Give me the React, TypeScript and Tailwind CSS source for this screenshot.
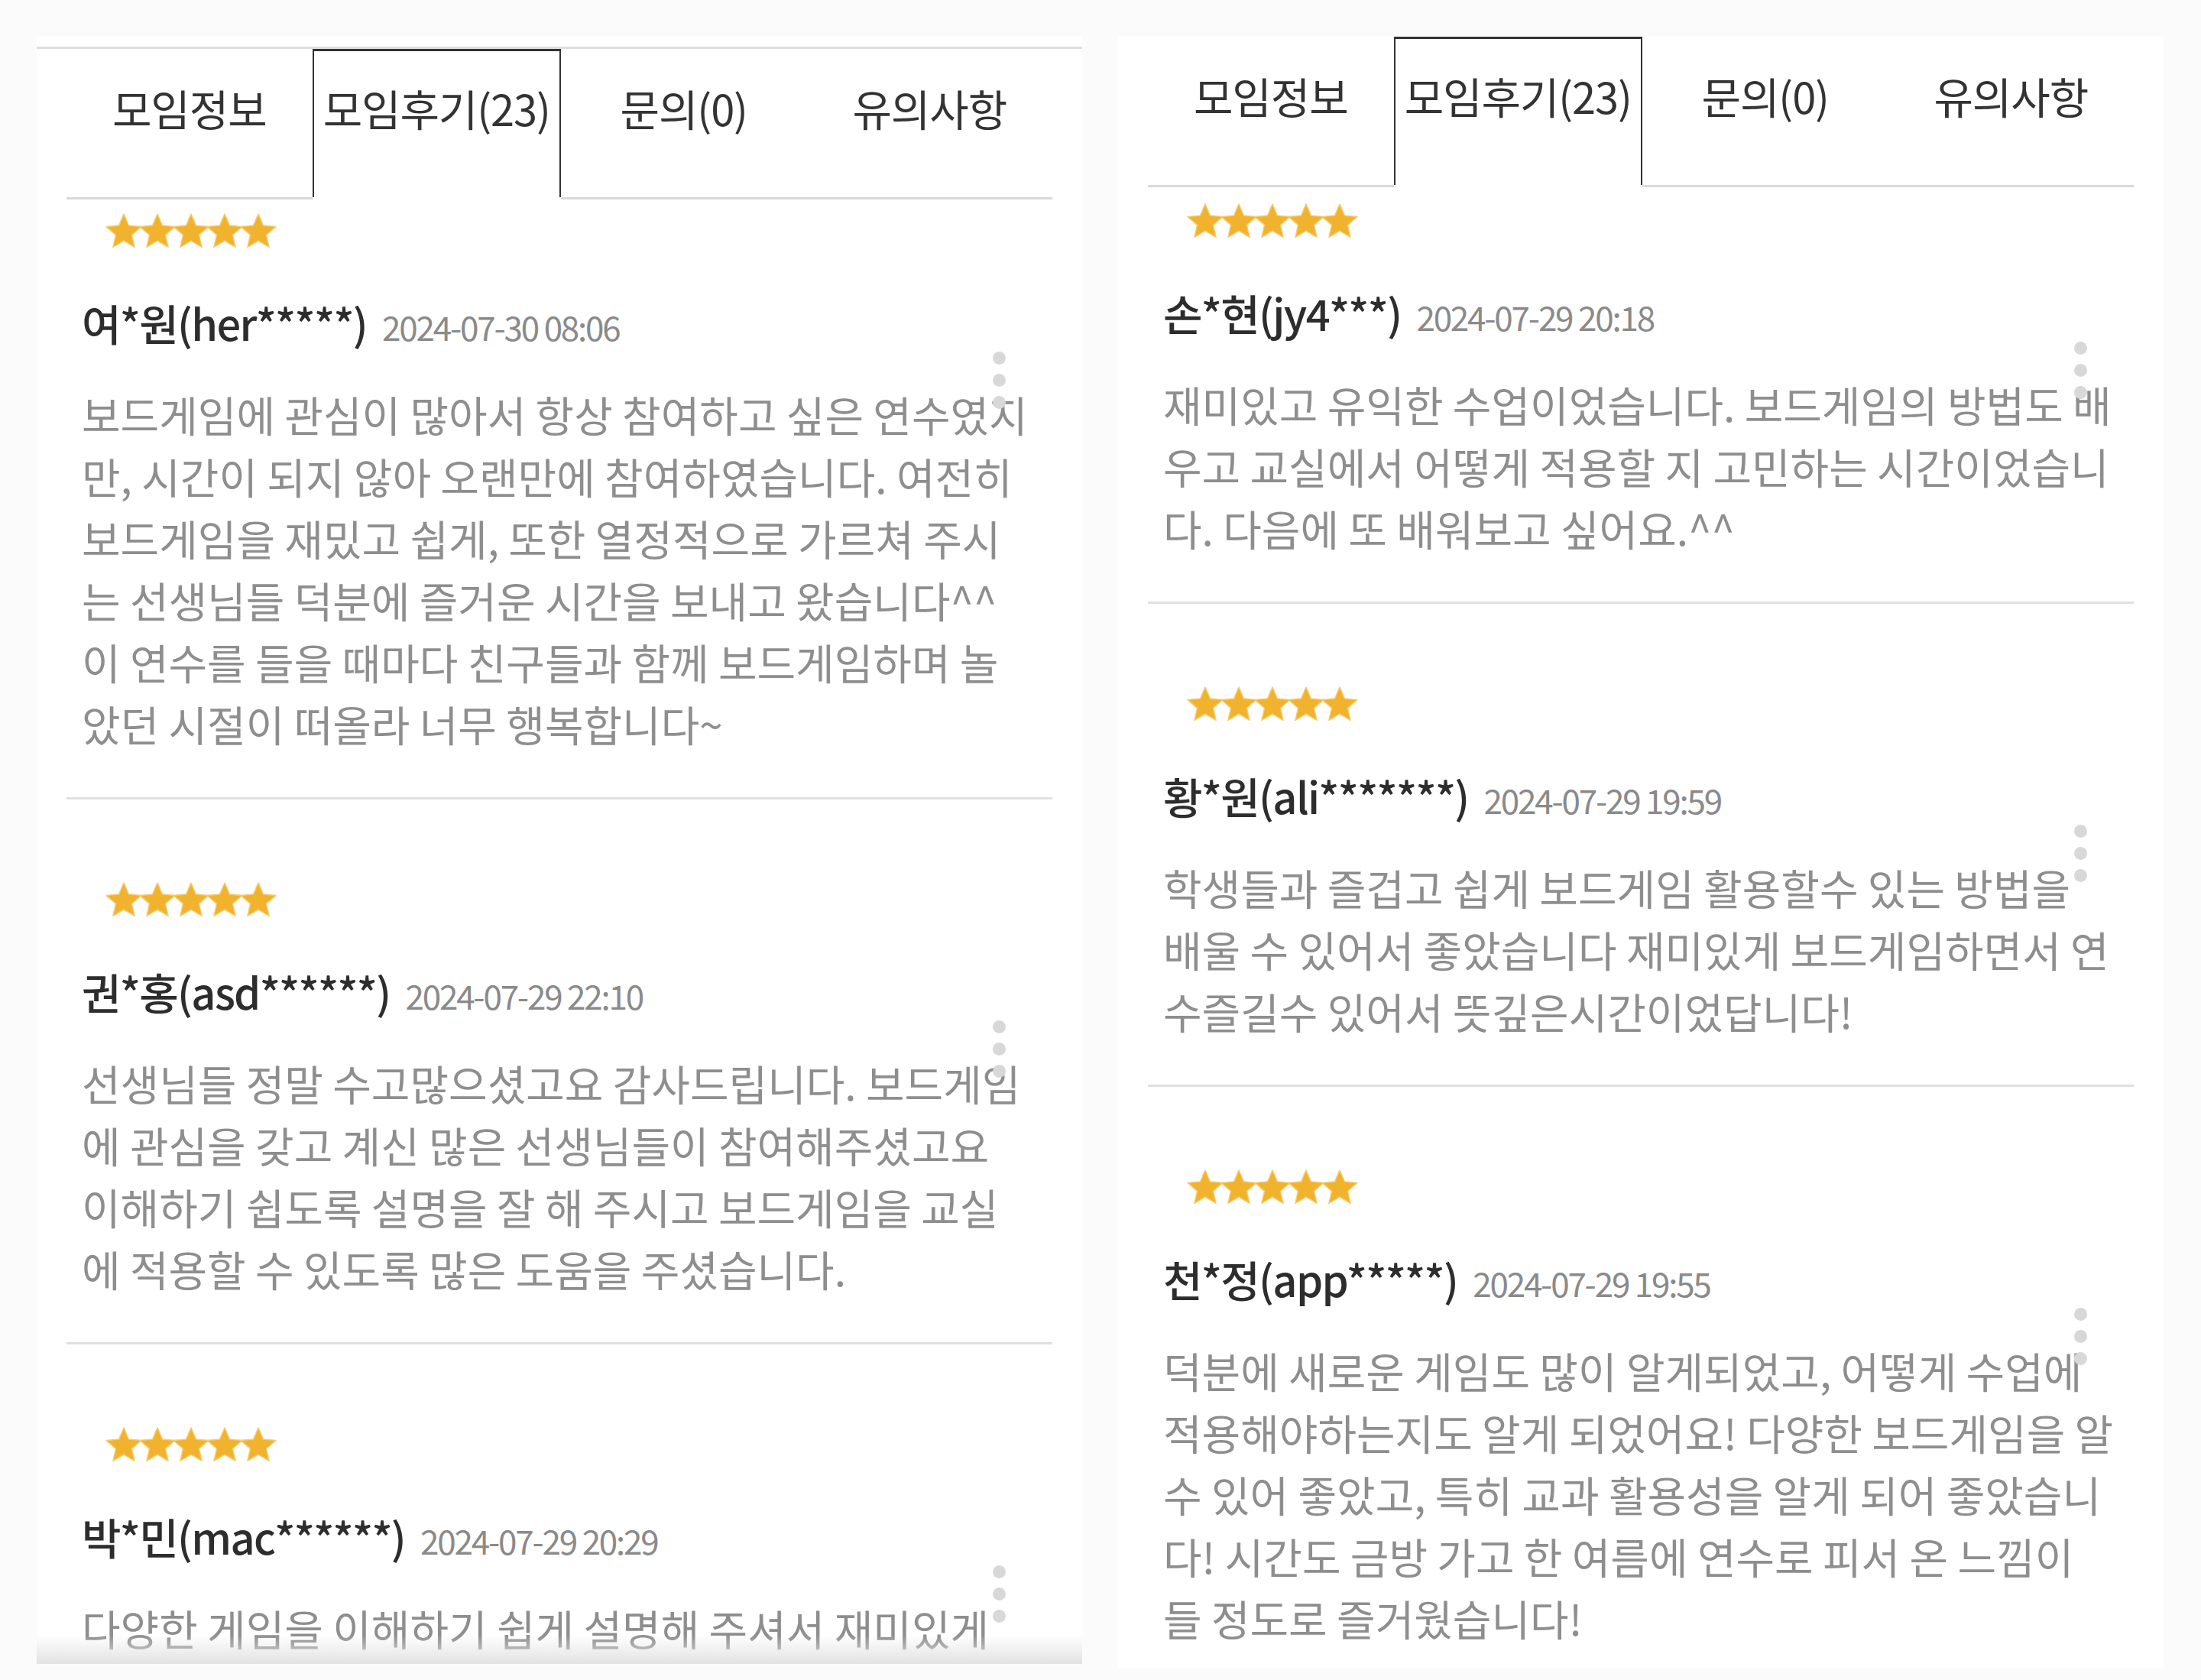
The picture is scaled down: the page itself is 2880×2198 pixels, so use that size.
import React from 'react';

type Review = {
  name: string;
  date: string;
  lines: string[];
};

const leftReviews: Review[] = [
  {
    name: '여*원(her*****)',
    date: '2024-07-30 08:06',
    lines: [
      '보드게임에 관심이 많아서 항상 참여하고 싶은 연수였지',
      '만, 시간이 되지 않아 오랜만에 참여하였습니다. 여전히',
      '보드게임을 재밌고 쉽게, 또한 열정적으로 가르쳐 주시',
      '는 선생님들 덕분에 즐거운 시간을 보내고 왔습니다^^',
      '이 연수를 들을 때마다 친구들과 함께 보드게임하며 놀',
      '았던 시절이 떠올라 너무 행복합니다~',
    ],
  },
  {
    name: '권*홍(asd******)',
    date: '2024-07-29 22:10',
    lines: [
      '선생님들 정말 수고많으셨고요 감사드립니다. 보드게임',
      '에 관심을 갖고 계신 많은 선생님들이 참여해주셨고요',
      '이해하기 쉽도록 설명을 잘 해 주시고 보드게임을 교실',
      '에 적용할 수 있도록 많은 도움을 주셨습니다.',
    ],
  },
  {
    name: '박*민(mac******)',
    date: '2024-07-29 20:29',
    lines: ['다양한 게임을 이해하기 쉽게 설명해 주셔서 재미있게'],
  },
];

const rightReviews: Review[] = [
  {
    name: '손*현(jy4***)',
    date: '2024-07-29 20:18',
    lines: [
      '재미있고 유익한 수업이었습니다. 보드게임의 방법도 배',
      '우고 교실에서 어떻게 적용할 지 고민하는 시간이었습니',
      '다. 다음에 또 배워보고 싶어요.^^',
    ],
  },
  {
    name: '황*원(ali*******)',
    date: '2024-07-29 19:59',
    lines: [
      '학생들과 즐겁고 쉽게 보드게임 활용할수 있는 방법을',
      '배울 수 있어서 좋았습니다 재미있게 보드게임하면서 연',
      '수즐길수 있어서 뜻깊은시간이었답니다!',
    ],
  },
  {
    name: '천*정(app*****)',
    date: '2024-07-29 19:55',
    lines: [
      '덕분에 새로운 게임도 많이 알게되었고, 어떻게 수업에',
      '적용해야하는지도 알게 되었어요! 다양한 보드게임을 알',
      '수 있어 좋았고, 특히 교과 활용성을 알게 되어 좋았습니',
      '다! 시간도 금방 가고 한 여름에 연수로 피서 온 느낌이',
      '들 정도로 즐거웠습니다!',
    ],
  },
];

const tabs = ['모임정보', '모임후기(23)', '문의(0)', '유의사항'];

function starPoints(cx: number, cy: number, R: number, r: number) {
  const pts: string[] = [];
  for (let i = 0; i < 10; i++) {
    const rad = i % 2 === 0 ? R : r;
    const a = ((-90 + i * 36) * Math.PI) / 180;
    pts.push(`${(cx + rad * Math.cos(a)).toFixed(2)},${(cy + rad * Math.sin(a)).toFixed(2)}`);
  }
  return pts.join(' ');
}

const Stars = () => (
  <svg width="224" height="48" viewBox="0 0 224 48">
    {[0, 1, 2, 3, 4].map((i) => (
      <polygon
        key={i}
        points={starPoints(24 + i * 44, 25, 24, 11)}
        fill="#f1b22d"
        stroke="#f6cc6e"
        strokeWidth="1.5"
        strokeLinejoin="round"
      />
    ))}
  </svg>
);

const Tabs = () => (
  <div className="mx-[39px] flex h-[197px]">
    {tabs.map((t, i) =>
      i === 1 ? (
        <div
          key={t}
          className="flex-1 self-start h-[194px] border-x-2 border-t-[3px] border-[#333] pt-[43px] text-center"
        >
          <span className="text-[56px] leading-[62px] text-[#333] tracking-[-0.02em]">{t}</span>
        </div>
      ) : (
        <div key={t} className="flex-1 border-b-[3px] border-[#d9d9d9] pt-[46px] text-center">
          <span className="text-[56px] leading-[62px] text-[#333] tracking-[-0.02em]">{t}</span>
        </div>
      )
    )}
  </div>
);

const ReviewItem = ({ review, last }: { review: Review; last: boolean }) => (
  <div className="relative">
    <div className="pl-[51px] h-[46px]">
      <Stars />
    </div>
    <div className="mt-[67px] pl-[20px] flex items-baseline h-[60px] leading-[60px] whitespace-nowrap">
      <span className="text-[56px] font-medium text-[#2d2d2d] tracking-[-0.03em]">{review.name}</span>
      <span className="ml-[20px] text-[44px] text-[#8a8a8a] tracking-[-0.05em]">{review.date}</span>
    </div>
    <div className="mt-[49px] pl-[20px] text-[55px] leading-[81px] text-[#8e8e8e] whitespace-nowrap">
      {review.lines.map((l, i) => (
        <div key={i}>{l}</div>
      ))}
    </div>
    <div className="absolute right-[61px] top-[181px] flex flex-col gap-[12px]">
      <span className="w-[17px] h-[17px] rounded-full bg-[#d8d8d8]" />
      <span className="w-[17px] h-[17px] rounded-full bg-[#d8d8d8]" />
      <span className="w-[17px] h-[17px] rounded-full bg-[#d8d8d8]" />
    </div>
    {!last && <div className="mt-[56px] mb-[108px] h-[3px] bg-[#e0e0e0]" />}
  </div>
);

const ReviewList = ({ reviews, top }: { reviews: Review[]; top: string }) => (
  <div className={`mx-[39px] ${top}`}>
    {reviews.map((r, i) => (
      <ReviewItem key={r.name} review={r} last={i === reviews.length - 1} />
    ))}
  </div>
);

export default function App() {
  return (
    <div className="w-[2880px] h-[2198px] bg-[#fbfbfb] flex gap-[47px] pl-[48px] pt-[48px] overflow-hidden font-['Noto_Sans_CJK_KR',sans-serif]">
      <section className="relative w-[1368px] h-[2129px] bg-white overflow-hidden">
        <div className="mt-[13px] h-[3px] bg-[#dedede]" />
        <Tabs />
        <ReviewList reviews={leftReviews} top="pt-[18px]" />
        <div className="absolute bottom-0 left-0 right-0 h-[38px] bg-linear-to-b from-white/0 to-[#e2e2e2]" />
      </section>
      <section className="relative w-[1368px] h-[2134px] bg-white overflow-hidden">
        <Tabs />
        <ReviewList reviews={rightReviews} top="pt-[21px]" />
      </section>
    </div>
  );
}
